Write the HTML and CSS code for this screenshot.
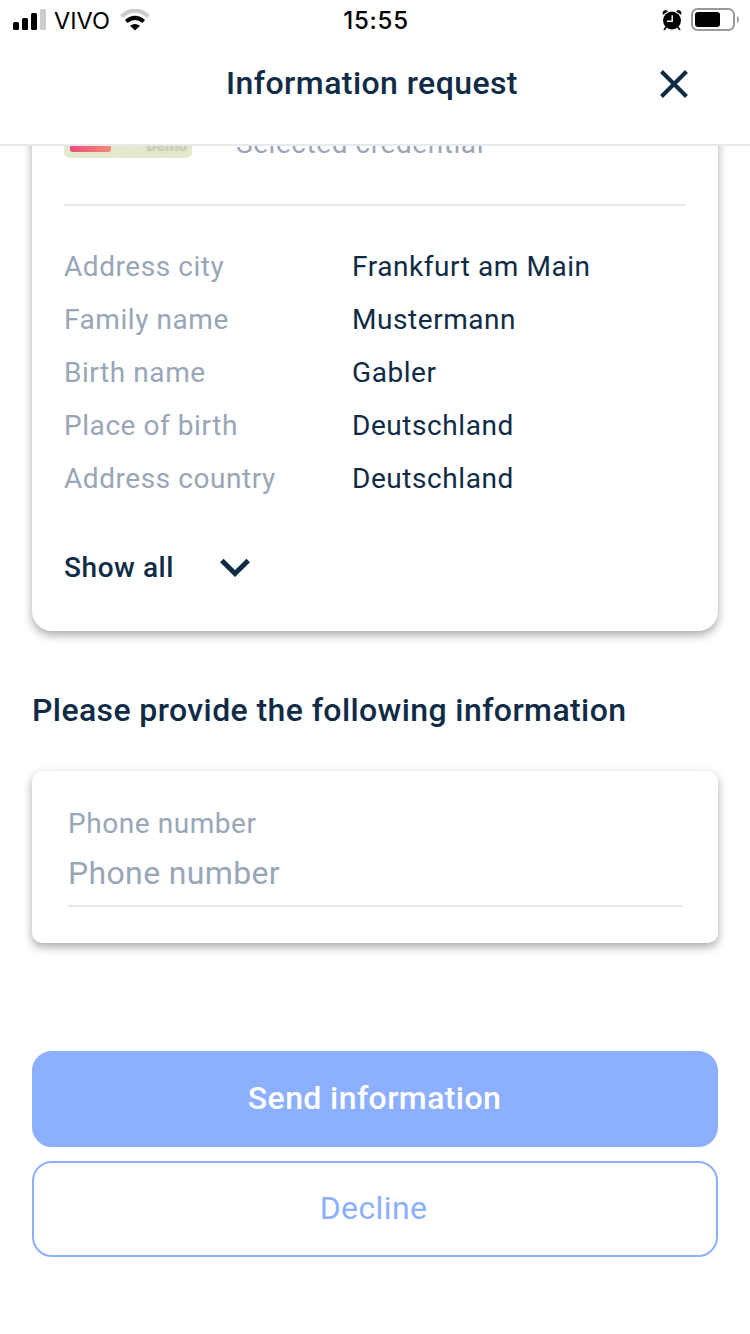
FILE: index.html
```html
<!DOCTYPE html>
<html lang="en">
<head>
<meta charset="utf-8">
<title>Information request</title>
<link rel="stylesheet" href="styles.css">
</head>
<body>
<div class="status">
  <div class="status-left">
    <svg class="signal" width="34" height="22" viewBox="0 0 34 22"><rect x="0" y="13" width="6" height="8" rx="1.5"/><rect x="9" y="9" width="6" height="12" rx="1.5"/><rect x="18" y="4" width="6" height="17" rx="1.5"/><rect x="27" y="0" width="6" height="21" rx="1.5" fill="#ccc"/></svg>
    <span class="carrier">VIVO</span>
    <svg class="wifi" width="30" height="22" viewBox="0 0 30 22" fill="none"><path d="M1.500 7.300Q15-4.300 28.500 7.300" stroke="#ccc" stroke-width="4.200"/><path d="M6.300 12.500Q15 5.200 23.700 12.500" stroke="#000" stroke-width="4.200"/><path d="M10 16.800Q15 13 20 16.800L15 21.500Z" fill="#000"/></svg>
  </div>
  <span class="time">15:55</span>
  <div class="status-right">
    <svg class="alarm" width="20" height="21" viewBox="0 0 20 21"><circle cx="10" cy="10.500" r="9"/><path d="M.900 4.800Q-.300 1 2.800.300Q5 0 6 1.200ZM19.100 4.800Q20.300 1 17.200.300Q15 0 14 1.200Z"/><path d="M4 17.500L2.300 19.500M16 17.500L17.700 19.500" stroke="#000" stroke-width="1.600" stroke-linecap="round"/><path d="M10.200 5.300V11.300H5" fill="none" stroke="#fff" stroke-width="1.400"/></svg>
    <svg class="battery" width="48" height="24" viewBox="0 0 48 24"><rect x="1" y="1" width="42" height="21" rx="5.500" fill="none" stroke="#999" stroke-width="2"/><rect x="4" y="4" width="25" height="15" rx="3"/><path d="M46 8Q48 9 48 11.500T46 15Z" fill="#999"/></svg>
  </div>
</div>
<header class="header">
  <h1 class="title">Information request</h1>
  <svg class="close" width="30" height="30" viewBox="0 0 30 30"><path d="M2.500 2.500L27.500 27.500M27.500 2.500L2.500 27.500" stroke="#0f2b46" stroke-width="4"/></svg>
</header>
<main class="content">
  <section class="card credential">
    <div class="credential-head">
      <div class="thumb"><span class="thumb-bar"></span><span class="thumb-text">Demo</span></div>
      <span class="credential-label">Selected credential</span>
    </div>
    <dl class="details">
      <dt>Address city</dt><dd>Frankfurt am Main</dd>
      <dt>Family name</dt><dd>Mustermann</dd>
      <dt>Birth name</dt><dd>Gabler</dd>
      <dt>Place of birth</dt><dd>Deutschland</dd>
      <dt>Address country</dt><dd>Deutschland</dd>
    </dl>
    <div class="show-all"><span>Show all</span><svg width="30" height="20" viewBox="0 0 30 20"><path d="M1.800 2.500L15 15.500L28.200 2.500" fill="none" stroke="#0f2b46" stroke-width="5"/></svg></div>
  </section>
  <h2 class="prompt">Please provide the following information</h2>
  <section class="card form">
    <label class="label" for="phone">Phone number</label>
    <input class="field" id="phone" type="tel" placeholder="Phone number">
  </section>
  <div class="actions">
    <button class="button send">Send information</button>
    <button class="button decline">Decline</button>
  </div>
</main>
</body>
</html>
```
FILE: styles.css
```css
* { box-sizing: border-box; }
body { margin: 0; width: 750px; height: 1334px; overflow: hidden; display: flex; flex-direction: column; background: #fff; color: #0f2b46; font-family: Roboto, sans-serif; font-size: 28px; letter-spacing: 0.560px; }
h1, h2, dl, dd { margin: 0; }
svg { display: block; flex: none; }
.status { height: 40px; flex: none; display: grid; grid-template-columns: 1fr auto 1fr; align-items: center; padding: 0 11px 0 13px; color: #000; font-family: Inter, sans-serif; }
.status-left, .status-right { display: flex; align-items: center; }
.status-right { justify-content: flex-end; gap: 9px; }
.carrier { font-size: 23.500px; letter-spacing: 0; margin: 0 10px 0 7px; width: 56px; }
.time { font-size: 24px; font-weight: 500; letter-spacing: 0.800px; line-height: 30px; padding-top: 1px; }
.header { height: 106px; flex: none; display: grid; grid-template-columns: 1fr auto 1fr; align-items: center; padding: 0 61px 18px; border-bottom: 2px solid #e8e9ed; }
.title { grid-column: 2; font-size: 32px; font-weight: 500; letter-spacing: 0.420px; position: relative; left: -3px; }
.close { justify-self: end; margin-top: 2px; }
.content { flex: 1; overflow: hidden; padding: 0 32px; }
.card { background: #fff; box-shadow: 0 4px 10px rgba(0, 0, 0, 0.340); }
.credential { height: 545px; margin-top: -60px; padding: 0 32px; border-radius: 20px; }
.credential-head { height: 120px; display: flex; gap: 44px; border-bottom: 2px solid #e8e9ed; }
.thumb { width: 128px; height: 72px; padding: 0 5px 6px 6px; display: flex; align-items: flex-end; justify-content: space-between; border-radius: 6px; background: repeating-linear-gradient(125deg, rgba(240, 240, 205, 0.350) 0 2px, transparent 2px 4px), #e4e7cd; }
.thumb-bar { width: 41px; height: 16px; border-radius: 3px; background: linear-gradient(90deg, #ea4e7c, #f58a77); }
.thumb-text { color: #c9cdb5; font-size: 16px; font-weight: 700; line-height: 13px; letter-spacing: -0.300px; text-shadow: 0 0 3px #d3d7bf; }
.credential-label { line-height: 32px; margin-top: 42px; color: #98a6b7; }
.details { display: grid; grid-template-columns: 288px 1fr; grid-auto-rows: 53px; line-height: 53px; margin-top: 34px; }
.details dt { color: #98a6b7; }
.show-all { display: flex; align-items: center; gap: 46px; height: 53px; margin-top: 36px; font-weight: 500; }
.prompt { margin-top: 59px; height: 40px; line-height: 40px; font-size: 32px; font-weight: 500; letter-spacing: 0.400px; white-space: nowrap; }
.form { height: 172px; margin-top: 41px; padding: 34px 36px 0; border-radius: 10px; display: flex; flex-direction: column; }
.label { height: 38px; line-height: 38px; color: #98a6b7; }
.field { height: 64px; padding: 0 0 2px; border: 0; border-bottom: 2px solid #e8e9ed; outline: 0; font: 32px Roboto, sans-serif; letter-spacing: 0.350px; background: none; }
.field::placeholder { color: #98a6b7; opacity: 1; }
.actions { display: grid; gap: 14px; margin-top: 108px; }
.button { height: 96px; padding: 0 1px 2px 0; border: 2px solid #8cb0ff; border-radius: 20px; background: #fff; color: #8cb0ff; font: 32px Roboto, sans-serif; letter-spacing: 0.400px; }
.send { background: #8cb0ff; color: #fff; font-weight: 500; }
.decline { padding-right: 3px; }
```
